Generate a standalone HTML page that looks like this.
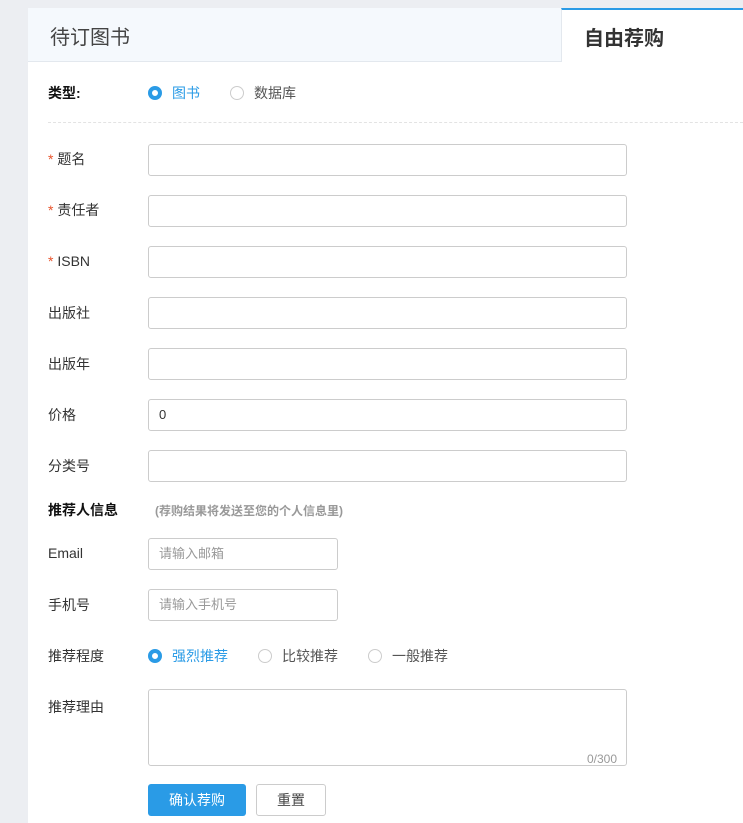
<!DOCTYPE html><html><head><meta charset="utf-8"><style>
*{box-sizing:border-box;margin:0;padding:0}
body{width:743px;height:823px;background:#eceef2;font-family:"Liberation Sans","Noto Sans CJK SC",sans-serif;font-size:14px;color:#333;position:relative;overflow:hidden}
.p{position:absolute;left:28px;top:8px;width:715px;height:815px;background:#fff}
.a{position:absolute;line-height:16px}
.t1{left:28px;top:8px;width:533px;height:54px;background:#f5f9fd;border-bottom:1px solid #e3e8ee;font-size:20px;color:#444;padding:13px 0 0 22px;line-height:normal}
.t2{left:561px;top:8px;width:182px;height:54px;background:#fff;border-top:2px solid #2a9be6;border-left:1px solid #e3e8ee;font-size:20px;font-weight:bold;color:#333;padding:12px 0 0 22px;line-height:normal}
.lb{left:48px;font-size:14px;color:#333}
.in{left:148px;width:479px;height:32px;border:1px solid #ccc;border-radius:3px;background:#fff;padding:7px 10px;font-size:13px;color:#333}
.sm{width:190px;color:#999}
.st{color:#e8542c}
.r{width:14px;height:14px;border-radius:50%;border:1px solid #ccc;background:#fff}
.ron{border:4px solid #2a9be6}
.blue{color:#2a9be6}
</style></head><body>
<div class="p"></div>
<div class="a t1">待订图书</div>
<div class="a t2">自由荐购</div>
<div class="a" style="left:48px;top:85px;font-weight:bold;color:#111">类型:</div>
<div class="a r ron" style="left:148px;top:86px"></div><div class="a blue" style="left:172px;top:85px">图书</div>
<div class="a r" style="left:230px;top:86px"></div><div class="a" style="left:254px;top:85px;color:#555">数据库</div>
<div class="a" style="left:48px;top:122px;width:695px;border-top:1px dashed #e3e3e3"></div>

<div class="a lb" style="top:151px"><span class="st">* </span>题名</div><div class="a in" style="top:144px"></div>
<div class="a lb" style="top:202px"><span class="st">* </span>责任者</div><div class="a in" style="top:195px"></div>
<div class="a lb" style="top:253px"><span class="st">* </span>ISBN</div><div class="a in" style="top:246px"></div>
<div class="a lb" style="top:305px">出版社</div><div class="a in" style="top:297px"></div>
<div class="a lb" style="top:356px">出版年</div><div class="a in" style="top:348px"></div>
<div class="a lb" style="top:407px">价格</div><div class="a in" style="top:399px">0</div>
<div class="a lb" style="top:458px">分类号</div><div class="a in" style="top:450px"></div>

<div class="a" style="left:48px;top:502px;font-weight:bold;color:#111">推荐人信息</div>
<div class="a" style="left:155px;top:503px;font-size:12px;color:#999;font-weight:bold">(荐购结果将发送至您的个人信息里)</div>
<div class="a lb" style="top:545px">Email</div><div class="a in sm" style="top:538px">请输入邮箱</div>
<div class="a lb" style="top:597px">手机号</div><div class="a in sm" style="top:589px">请输入手机号</div>
<div class="a lb" style="top:648px">推荐程度</div>
<div class="a r ron" style="left:148px;top:649px"></div><div class="a blue" style="left:172px;top:648px">强烈推荐</div>
<div class="a r" style="left:258px;top:649px"></div><div class="a" style="left:282px;top:648px;color:#555">比较推荐</div>
<div class="a r" style="left:368px;top:649px"></div><div class="a" style="left:392px;top:648px;color:#555">一般推荐</div>
<div class="a lb" style="top:699px">推荐理由</div>
<div class="a in" style="top:689px;height:77px"></div>
<div class="a" style="left:587px;top:751px;font-size:12px;color:#999">0/300</div>
<div class="a" style="left:148px;top:784px;width:98px;height:32px;background:#2a9be6;border-radius:3px;color:#fff;text-align:center;line-height:32px">确认荐购</div>
<div class="a" style="left:256px;top:784px;width:70px;height:32px;border:1px solid #ccc;border-radius:3px;color:#444;text-align:center;line-height:30px">重置</div>
</body></html>
